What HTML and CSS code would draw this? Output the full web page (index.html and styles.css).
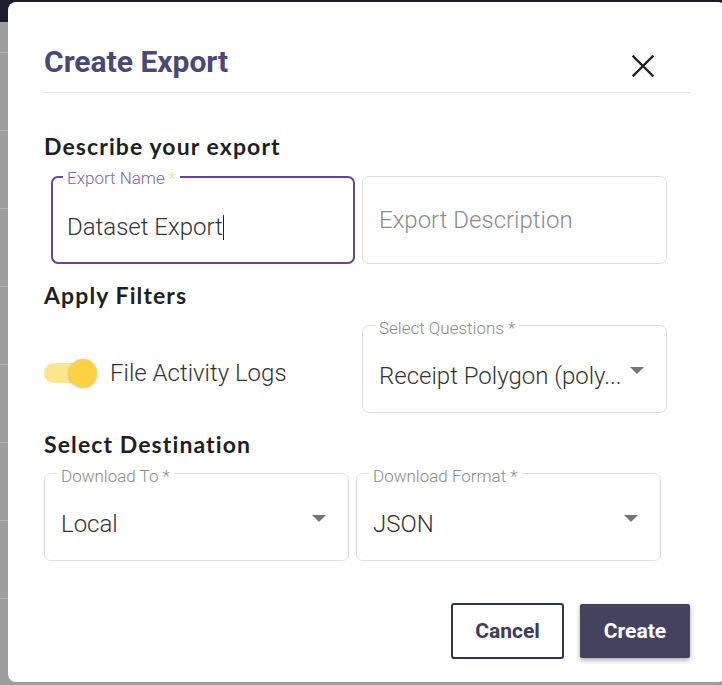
FILE: index.html
```html
<!DOCTYPE html>
<html lang="en">
<head>
<meta charset="utf-8">
<title>Create Export</title>
<link rel="stylesheet" href="styles.css">
</head>
<body>
<div class="backdrop">
  <div class="backdrop-header"></div>
  <div class="backdrop-rows">
    <div class="backdrop-row"></div>
    <div class="backdrop-row"></div>
    <div class="backdrop-row"></div>
    <div class="backdrop-row"></div>
    <div class="backdrop-row"></div>
    <div class="backdrop-row"></div>
    <div class="backdrop-row"></div>
    <div class="backdrop-row"></div>
  </div>
</div>

<div class="dialog" role="dialog" aria-labelledby="dlg-title">
  <header class="dialog-header">
    <h1 id="dlg-title" class="dialog-title">Create Export</h1>
    <button class="close-btn" aria-label="Close">
      <svg width="22" height="22" viewBox="0 0 22 22" aria-hidden="true">
        <path d="M1.5 1.5 L20.5 20.5 M20.5 1.5 L1.5 20.5" stroke="#222" stroke-width="2.4" stroke-linecap="square" fill="none"/>
      </svg>
    </button>
  </header>

  <h2 class="section-title first">Describe your export</h2>
  <div class="row row-first">
    <div class="field field-focused field-narrow">
      <span class="field-label label-focused">Export Name <span class="req">*</span></span>
      <span class="field-value">Dataset Export<span class="caret"></span></span>
    </div>
    <div class="field field-empty">
      <span class="field-placeholder">Export Description</span>
    </div>
  </div>

  <h2 class="section-title">Apply Filters</h2>
  <div class="row">
    <div class="switch-cell">
      <span class="switch">
        <span class="switch-track"></span>
        <span class="switch-knob"></span>
      </span>
      <span class="switch-label">File Activity Logs</span>
    </div>
    <div class="field">
      <span class="field-label">Select Questions *</span>
      <span class="field-value">Receipt Polygon (poly...</span>
      <span class="arrow"></span>
    </div>
  </div>

  <h2 class="section-title">Select Destination</h2>
  <div class="row">
    <div class="field">
      <span class="field-label">Download To *</span>
      <span class="field-value">Local</span>
      <span class="arrow"></span>
    </div>
    <div class="field">
      <span class="field-label">Download Format *</span>
      <span class="field-value">JSON</span>
      <span class="arrow"></span>
    </div>
  </div>

  <div class="actions">
    <button class="btn btn-cancel">Cancel</button>
    <button class="btn btn-create">Create</button>
  </div>
</div>
</body>
</html>
```

FILE: styles.css
```css
html, body {
  margin: 0;
  padding: 0;
}

body {
  width: 722px;
  height: 685px;
  overflow: hidden;
  position: relative;
  background: #8f8f8f;
  font-family: Roboto, "Liberation Sans", Arial, sans-serif;
}

.backdrop {
  height: 685px;
  display: flex;
  flex-direction: column;
}

.backdrop-header {
  height: 22px;
  background: #1d1c2b;
  flex: none;
}

.backdrop-rows {
  flex: 1;
  background: #9e9e9e;
  display: flex;
  flex-direction: column;
}

.backdrop-row {
  height: 78px;
  border-bottom: 1px solid #b3b3b3;
  box-sizing: border-box;
  flex: none;
}

.backdrop-row:first-child {
  height: 31px;
}

.dialog {
  position: absolute;
  left: 8px;
  top: 2px;
  width: 718px;
  height: 680px;
  box-sizing: border-box;
  padding: 0 36px;
  background: #ffffff;
  border-radius: 8px;
  display: flex;
  flex-direction: column;
}

.dialog-header {
  display: flex;
  align-items: center;
  justify-content: space-between;
  padding: 42px 0 12px;
  border-bottom: 1px solid #e4e4e4;
  flex: none;
}

.dialog-title {
  margin: 0;
  font-family: Roboto, "Liberation Sans", sans-serif;
  font-weight: 700;
  font-size: 30px;
  line-height: 36px;
  color: #4a4878;
}

.close-btn {
  margin: 8px 36px 0 0;
  padding: 0;
  border: none;
  background: none;
  width: 22px;
  height: 22px;
  display: block;
}

.close-btn svg {
  display: block;
}

.section-title {
  margin: 18px 0 0;
  font-family: Lato, "Open Sans", sans-serif;
  font-weight: 700;
  font-size: 23px;
  line-height: 26.4px;
  letter-spacing: 1.1px;
  color: #1f1f1f;
}

.section-title.first {
  margin-top: 40px;
}

.row {
  display: flex;
  gap: 7px;
  margin-top: 16px;
  flex: none;
}

.row-first {
  margin-top: 17px;
  padding-left: 7px;
}

.field {
  position: relative;
  box-sizing: border-box;
  width: 305px;
  height: 88px;
  border: 1px solid #dedede;
  border-radius: 7px;
  padding: 36px 17px 0 16px;
  display: flex;
  align-items: flex-start;
  flex: none;
}

.field-narrow {
  width: 304px;
}

.field-focused {
  border: 2px solid #61459e;
  padding: 35px 17px 0 14px;
}

.field-empty {
  align-items: center;
  padding-top: 0;
}

.field-label {
  position: absolute;
  top: -8px;
  left: 12px;
  padding: 0 4px;
  background: #ffffff;
  font-weight: 300;
  font-size: 17px;
  line-height: 20px;
  color: #8a8a8a;
  white-space: nowrap;
}

.label-focused {
  top: -10px;
  left: 10px;
  color: #7a68ad;
}

.req {
  color: #f2da7c;
}

.field-value {
  flex: 1;
  font-weight: 300;
  font-size: 24px;
  line-height: 28px;
  color: #333333;
  white-space: nowrap;
  overflow: hidden;
}

.field-placeholder {
  font-weight: 300;
  font-size: 24px;
  line-height: 28px;
  color: #8c8c8c;
  white-space: nowrap;
}

.caret {
  display: inline-block;
  width: 1px;
  height: 25px;
  background: #222222;
  vertical-align: -5px;
}

.arrow {
  flex: none;
  width: 0;
  height: 0;
  margin: 5px 5px 0 0;
  border-left: 7px solid transparent;
  border-right: 7px solid transparent;
  border-top: 7px solid #757575;
}

.switch-cell {
  width: 311px;
  box-sizing: border-box;
  padding-top: 8px;
  display: flex;
  align-items: center;
  flex: none;
}

.switch {
  position: relative;
  width: 53px;
  height: 28px;
  flex: none;
}

.switch-track {
  position: absolute;
  left: 0;
  top: 4px;
  width: 52px;
  height: 20px;
  border-radius: 10px;
  background: #fde58c;
}

.switch-knob {
  position: absolute;
  left: 25px;
  top: 0;
  width: 28px;
  height: 28px;
  border-radius: 50%;
  background: #fdd23e;
  box-shadow: 0 1px 3px rgba(0, 0, 0, 0.3);
}

.switch-label {
  margin-left: 13px;
  font-weight: 300;
  font-size: 24px;
  line-height: 28px;
  color: #333333;
  white-space: nowrap;
}

.actions {
  display: flex;
  justify-content: flex-end;
  align-items: center;
  gap: 16px;
  margin-top: 42px;
  flex: none;
}

.btn {
  box-sizing: border-box;
  font-family: Roboto, "Liberation Sans", sans-serif;
  font-weight: 700;
  font-size: 21px;
  line-height: 24px;
  padding: 0;
  cursor: pointer;
}

.btn-cancel {
  width: 113px;
  height: 56px;
  border: 2px solid #33334a;
  border-radius: 3px;
  background: #ffffff;
  color: #3d3d55;
}

.btn-create {
  width: 110px;
  height: 54px;
  border: none;
  border-radius: 2px;
  background: #44425f;
  color: #ffffff;
  box-shadow: 0 2px 5px rgba(0, 0, 0, 0.35);
}
```
